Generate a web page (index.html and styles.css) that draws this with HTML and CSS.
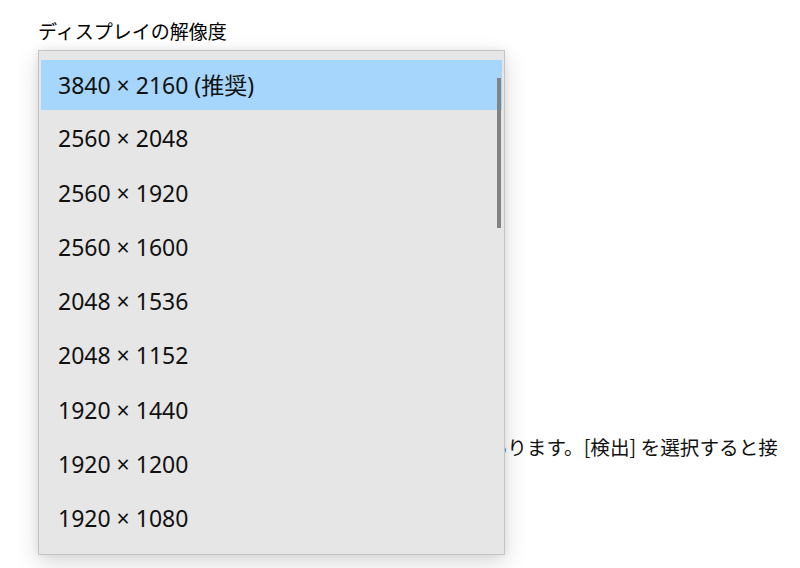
FILE: index.html
```html
<!DOCTYPE html>
<html lang="ja">
<head>
<meta charset="utf-8">
<title>ディスプレイの解像度</title>
<link rel="stylesheet" href="styles.css">
</head>
<body>
<div class="page">
  <div class="label">ディスプレイの解像度</div>
  <p class="note">古いディスプレイは、自動的に接続されない場合があります。[検出] を選択すると接続を試みます。</p>

  <div class="dropdown" role="listbox">
    <ul class="list">
      <li class="item selected">3840 × 2160 (推奨)</li>
      <li class="item">2560 × 2048</li>
      <li class="item">2560 × 1920</li>
      <li class="item">2560 × 1600</li>
      <li class="item">2048 × 1536</li>
      <li class="item">2048 × 1152</li>
      <li class="item">1920 × 1440</li>
      <li class="item">1920 × 1200</li>
      <li class="item">1920 × 1080</li>
    </ul>
    <div class="thumb"></div>
  </div>
</div>
</body>
</html>
```

FILE: styles.css
```css
html, body {
  margin: 0;
  padding: 0;
  background: #ffffff;
  overflow: hidden;
}

.page {
  position: relative;
  width: 800px;
  height: 568px;
  padding: 17px 0 0 38px;
  box-sizing: border-box;
  display: flex;
  flex-direction: column;
  font-family: "Noto Sans CJK JP", "Noto Sans", sans-serif;
  color: #000;
  overflow: hidden;
}

.label {
  font-size: 19px;
  line-height: 28px;
  white-space: nowrap;
}

.note {
  margin: 388px 0 0 0;
  width: 750px;
  font-size: 19.62px;
  line-height: 28px;
  color: #111;
}

.dropdown {
  position: absolute;
  left: 38px;
  top: 50px;
  width: 467px;
  height: 505px;
  box-sizing: border-box;
  background: #e6e6e6;
  border: 1px solid #c4c4c4;
  box-shadow: 0 8px 22px rgba(0, 0, 0, 0.15), 0 0 8px rgba(0, 0, 0, 0.07);
  overflow: hidden;
}

.list {
  list-style: none;
  margin: 0;
  padding: 9px 2px 0 2px;
  display: flex;
  flex-direction: column;
  gap: 4.25px;
}

.item {
  height: 50px;
  box-sizing: border-box;
  padding: 0 0 2px 17px;
  display: flex;
  align-items: center;
  font-family: "Noto Sans", "Noto Sans CJK JP", sans-serif;
  font-size: 23px;
  color: #111;
  white-space: nowrap;
}

.item.selected {
  background: #a6d6fb;
}

.thumb {
  position: absolute;
  right: 3px;
  top: 27px;
  width: 4px;
  height: 150px;
  background: #838383;
}
```
